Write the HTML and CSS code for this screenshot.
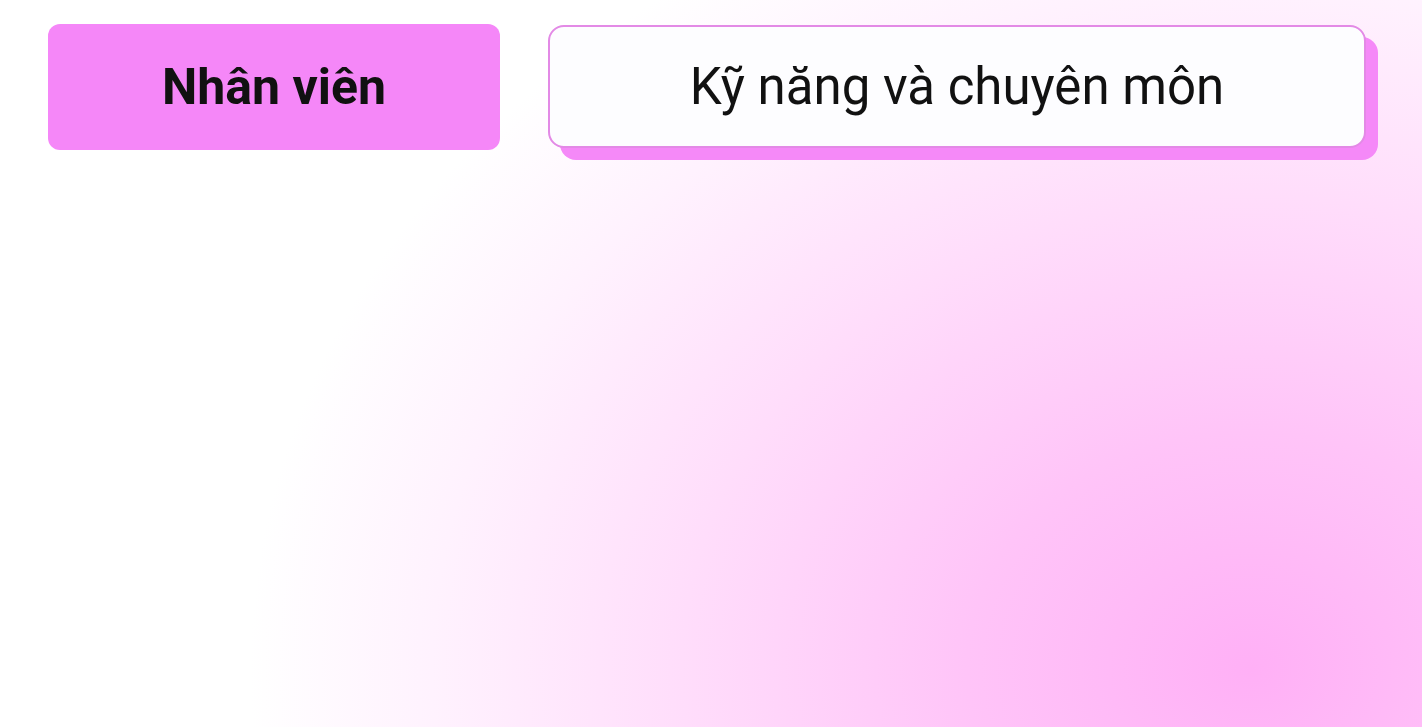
FILE: index.html
```html
<!DOCTYPE html>
<html lang="vi">
<head>
<meta charset="utf-8">
<link rel="stylesheet" href="styles.css">
</head>
<body>
<div class="page">
  <div class="tabs">
    <button class="tab tab-active">Nhân viên</button>
    <button class="tab tab-outline">Kỹ năng và chuyên môn</button>
  </div>
</div>
</body>
</html>
```
FILE: styles.css
```css
html, body {
  margin: 0;
  padding: 0;
  height: 100%;
}
body {
  font-family: Roboto, "Noto Sans", sans-serif;
  background: radial-gradient(ellipse 80% 130% at 88% 92%, #ffb0f6 0%, #ffc4f8 25%, #ffddfb 50%, #fff2fe 72%, #ffffff 88%);
  min-height: 727px;
}
.page {
  padding: 24px 48px;
}
.tabs {
  display: flex;
  gap: 48px;
  align-items: flex-start;
}
.tab {
  font-family: Roboto, "Noto Sans", sans-serif;
  font-size: 50px;
  color: #111;
  display: flex;
  align-items: center;
  justify-content: center;
  cursor: pointer;
  padding: 0;
}
.tab-active {
  width: 452px;
  height: 126px;
  background: #f587f8;
  border: none;
  border-radius: 12px;
  font-weight: 700;
}
.tab-outline {
  margin-top: 1px;
  width: 818px;
  height: 123px;
  background: #fdfdff;
  border: 2px solid #e38ae6;
  border-radius: 16px;
  font-size: 51px;
  font-weight: 400;
  box-shadow: 12px 12px 0 #f589f8;
}
```
